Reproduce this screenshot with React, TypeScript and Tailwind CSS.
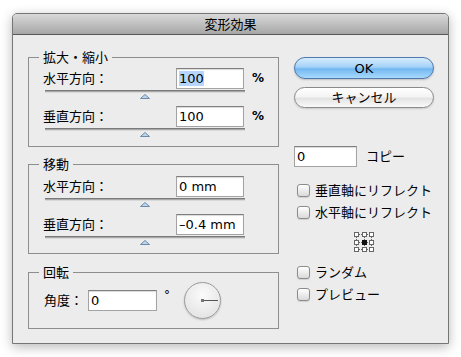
import * as React from 'react';

const font = { fontFamily: '"DejaVu Sans", "Noto Sans CJK JP", sans-serif' };

const Slider: React.FC = () => (
  <div className="flex flex-col items-center ml-[2px] w-[200px]">
    <div className="mt-[1px] w-full h-[3px] border-t border-[#7a7a7a] bg-[#a9a9a9] border-b border-b-[#d9d9d9]" />
    <svg width="10" height="5" viewBox="0 0 10 5" className="mt-[1px]">
      <polygon points="5,0.5 9.5,4.5 0.5,4.5" fill="#bcd6ee" stroke="#6d8aa8" strokeWidth="1" />
    </svg>
  </div>
);

const Field: React.FC<{ value: string; width: string; selected?: boolean }> = ({ value, width, selected }) => (
  <div
    className={`${width} h-[21px] bg-white border border-[#a3a3a3] border-t-[#7f7f7f] shadow-[inset_0_1px_1px_rgba(0,0,0,0.15)] flex items-center pl-[2px] text-[13px] leading-[15px] text-black`}
  >
    <span className={selected ? 'bg-[#b5d5fc]' : ''}>{value}</span>
  </div>
);

const Row: React.FC<{ label: string; value: string; unit?: string; selected?: boolean }> = ({ label, value, unit, selected }) => (
  <div className="flex flex-col">
    <div className="flex items-center">
      <span className="w-[133px] text-[13px] leading-[15px]">{label}</span>
      <Field value={value} width="w-[68px]" selected={selected} />
      {unit && <span className="ml-[8px] text-[12px] font-bold leading-[15px]">{unit}</span>}
    </div>
    <Slider />
  </div>
);

const Group: React.FC<{ title: string; className?: string; children: React.ReactNode }> = ({ title, className, children }) => (
  <div className={`relative border border-[#8e8e8e] ${className ?? ''}`}>
    <span className="absolute -top-[8px] left-[10px] px-[4px] bg-[#ececec] text-[13px] leading-[15px]">{title}</span>
    {children}
  </div>
);

const Check: React.FC<{ label: string }> = ({ label }) => (
  <div className="flex items-center h-[22px] pl-[3px]">
    <div className="w-[13px] h-[13px] rounded-[3px] border border-[#8c8c8c] bg-gradient-to-b from-white to-[#dadada] shadow-[0_1px_1px_rgba(0,0,0,0.12)]" />
    <span className="ml-[5px] text-[13px] leading-[15px]">{label}</span>
  </div>
);

const RefPoint: React.FC = () => (
  <svg width="20" height="20" viewBox="0 0 20 20">
    <g stroke="#666" strokeWidth="1" strokeDasharray="1 1" fill="none">
      <line x1="5" y1="2.5" x2="15" y2="2.5" />
      <line x1="5" y1="10.5" x2="15" y2="10.5" />
      <line x1="5" y1="17.5" x2="15" y2="17.5" />
      <line x1="2.5" y1="5" x2="2.5" y2="15" />
      <line x1="10.5" y1="5" x2="10.5" y2="15" />
      <line x1="17.5" y1="5" x2="17.5" y2="15" />
    </g>
    {[0, 8, 15].map((y) =>
      [0, 8, 15].map((x) => (
        <rect
          key={`${x}-${y}`}
          x={x + 0.5}
          y={y + 0.5}
          width="4"
          height="4"
          fill={x === 8 && y === 8 ? '#111' : '#fff'}
          stroke={x === 8 && y === 8 ? '#111' : '#666'}
          strokeWidth="1"
        />
      ))
    )}
  </svg>
);

const Dial: React.FC = () => (
  <div className="relative w-[37px] h-[37px] rounded-full border border-[#9a9a9a] bg-[radial-gradient(circle_at_50%_35%,#fbfbfb,#dedede)] shadow-[0_1px_2px_rgba(0,0,0,0.2)]">
    <div className="absolute left-[17px] top-[17px] w-[16px] h-[1px] bg-[#555]" />
    <div className="absolute left-[16px] top-[16px] w-[3px] h-[3px] bg-[#777]" />
  </div>
);

export default function App() {
  return (
    <div className="min-h-screen bg-white pt-[13px] pl-[12px] text-black" style={font}>
      <div className="w-[437px] h-[331px] border border-[#767676] rounded-t-[5px] bg-[#ececec] shadow-[0_3px_12px_rgba(0,0,0,0.28)] flex flex-col overflow-hidden">
        <div className="h-[21px] shrink-0 border-b border-[#585858] bg-gradient-to-b from-[#d9d9d9] to-[#a7a7a7] flex items-center justify-center text-[13px] leading-[15px]">
          変形効果
        </div>
        <div className="flex pl-[15px]">
          <div className="w-[251px] flex flex-col pt-[22px]">
            <Group title="拡大・縮小" className="pt-[10px] pb-[9px] pl-[14px]">
              <div className="flex flex-col gap-[7px]">
                <Row label="水平方向：" value="100" unit="%" selected />
                <Row label="垂直方向：" value="100" unit="%" />
              </div>
            </Group>
            <Group title="移動" className="mt-[17px] pt-[11px] pb-[8px] pl-[14px]">
              <div className="flex flex-col gap-[7px]">
                <Row label="水平方向：" value="0 mm" />
                <Row label="垂直方向：" value="–0.4 mm" />
              </div>
            </Group>
            <Group title="回転" className="mt-[18px] h-[57px] pl-[15px] flex items-center">
              <span className="w-[44px] text-[13px] leading-[15px]">角度：</span>
              <Field value="0" width="w-[69px]" />
              <span className="ml-[7px] -mt-[10px] text-[12px] leading-[15px]">°</span>
              <div className="ml-[14px]">
                <Dial />
              </div>
            </Group>
          </div>
          <div className="ml-[15px] w-[140px] flex flex-col pt-[22px]">
            <button className="h-[22px] rounded-full border border-[#4f78ae] bg-[linear-gradient(to_bottom,#d6ecfd_0%,#a4d2f8_45%,#72b7f0_55%,#a8dafd_100%)] shadow-[0_1px_2px_rgba(0,0,0,0.2)] text-[13px] leading-[15px]">
              OK
            </button>
            <button className="mt-[8px] h-[21px] rounded-full border border-[#8a8a8a] bg-[linear-gradient(to_bottom,#ffffff_0%,#f4f4f4_45%,#e3e3e3_55%,#f9f9f9_100%)] shadow-[0_1px_2px_rgba(0,0,0,0.15)] text-[13px] leading-[15px]">
              キャンセル
            </button>
            <div className="mt-[38px] flex items-center">
              <Field value="0" width="w-[63px]" />
              <span className="ml-[9px] text-[13px] leading-[15px]">コピー</span>
            </div>
            <div className="mt-[12px] flex flex-col">
              <Check label="垂直軸にリフレクト" />
              <Check label="水平軸にリフレクト" />
            </div>
            <div className="flex justify-center mt-[9px] mb-[9px]">
              <RefPoint />
            </div>
            <Check label="ランダム" />
            <Check label="プレビュー" />
          </div>
        </div>
      </div>
    </div>
  );
}
